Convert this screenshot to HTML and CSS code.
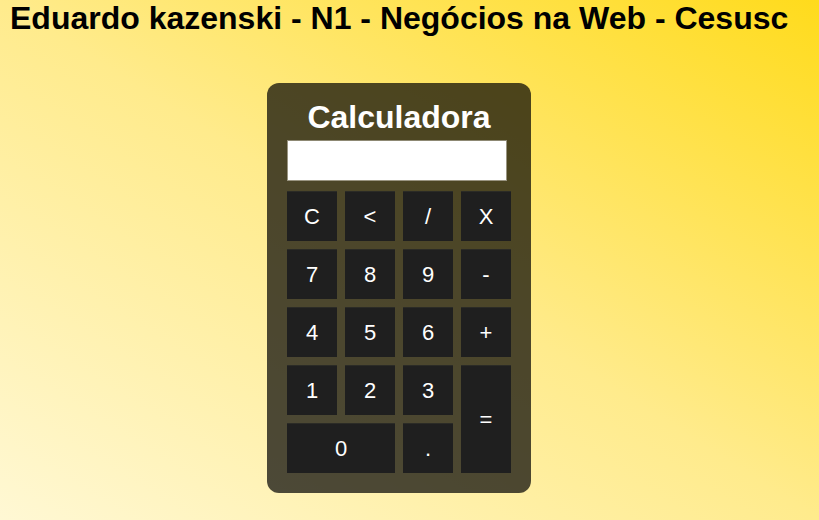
FILE: index.html
```html
<!DOCTYPE html>
<html lang="pt-BR">
<head>
<meta charset="utf-8">
<title>Calculadora</title>
<link rel="stylesheet" href="styles.css">
</head>
<body>
<h1 class="page-title">Eduardo kazenski - N1 - Negócios na Web - Cesusc</h1>
<main class="stage">
  <div class="calc">
    <h2 class="calc-title">Calculadora</h2>
    <input class="display" type="text" value="">
    <div class="keys">
      <button class="key">C</button>
      <button class="key">&lt;</button>
      <button class="key">/</button>
      <button class="key">X</button>
      <button class="key">7</button>
      <button class="key">8</button>
      <button class="key">9</button>
      <button class="key">-</button>
      <button class="key">4</button>
      <button class="key">5</button>
      <button class="key">6</button>
      <button class="key">+</button>
      <button class="key">1</button>
      <button class="key">2</button>
      <button class="key">3</button>
      <button class="key key-tall">=</button>
      <button class="key key-wide">0</button>
      <button class="key">.</button>
    </div>
  </div>
</main>
</body>
</html>
```

FILE: styles.css
```css
html, body {
  height: 100%;
}
body {
  margin: 0;
  padding: 0 8px 0 10px;
  font-family: "Liberation Sans", Arial, sans-serif;
  background: linear-gradient(to top right, #fff8d4 0%, #ffeb8c 50%, #ffdb1c 100%);
  overflow: hidden;
}
.page-title {
  margin: 0;
  font-size: 32px;
  line-height: 37px;
  font-weight: bold;
  color: #000;
}
.stage {
  display: flex;
  justify-content: flex-start;
  padding-left: 257px;
  padding-top: 46px;
}
.calc {
  width: 264px;
  box-sizing: border-box;
  padding: 16px 20px 20px;
  border-radius: 12px;
  background: rgba(0, 0, 0, 0.7);
  display: flex;
  flex-direction: column;
  align-items: flex-start;
}
.calc-title {
  align-self: stretch;
  margin: 0 0 4px;
  text-align: center;
  color: #fff;
  font-size: 32px;
  line-height: 37px;
  font-weight: bold;
}
.display {
  width: 220px;
  height: 41px;
  box-sizing: border-box;
  margin: 0 0 10px;
  border: 1px solid #9a9582;
  border-top-color: #8d8873;
  background: #fff;
  padding: 0 4px;
  font: 20px "Liberation Sans", Arial, sans-serif;
}
.keys {
  display: grid;
  grid-template-columns: repeat(4, 50px);
  grid-auto-rows: 50px;
  gap: 8px;
}
.key {
  margin: 0;
  padding: 0;
  border: none;
  border-top: 1px solid #2b2b26;
  background: #1f1f1f;
  color: #fff;
  font: 22px "Liberation Sans", Arial, sans-serif;
}
.key-tall {
  grid-row: span 2;
  grid-column: 4;
}
.key-wide {
  grid-column: span 2;
}
```
